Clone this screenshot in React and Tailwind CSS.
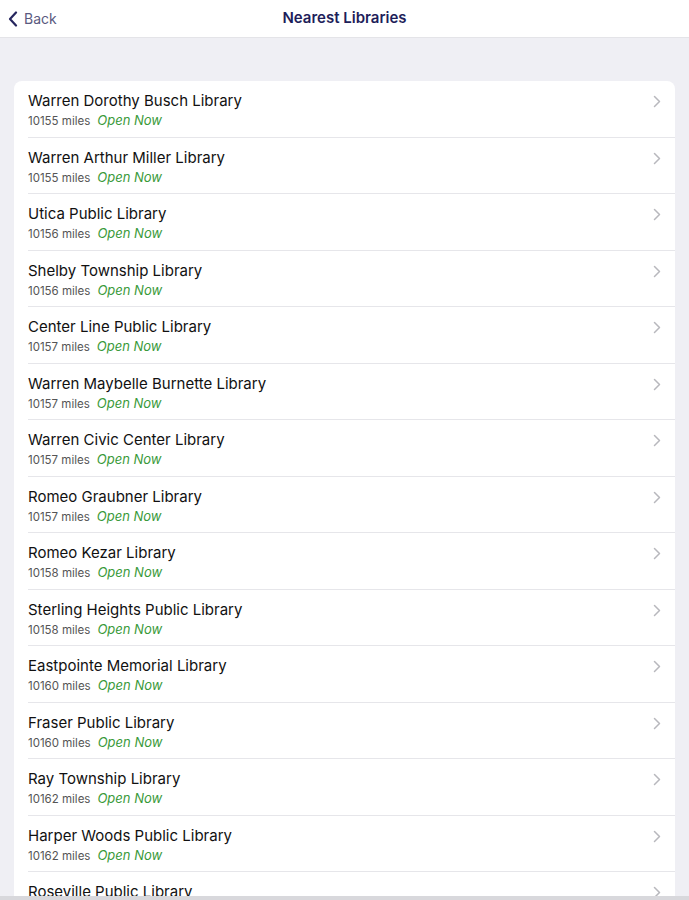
import React from 'react';

const libraries = [
  { name: 'Warren Dorothy Busch Library', miles: '10155' },
  { name: 'Warren Arthur Miller Library', miles: '10155' },
  { name: 'Utica Public Library', miles: '10156' },
  { name: 'Shelby Township Library', miles: '10156' },
  { name: 'Center Line Public Library', miles: '10157' },
  { name: 'Warren Maybelle Burnette Library', miles: '10157' },
  { name: 'Warren Civic Center Library', miles: '10157' },
  { name: 'Romeo Graubner Library', miles: '10157' },
  { name: 'Romeo Kezar Library', miles: '10158' },
  { name: 'Sterling Heights Public Library', miles: '10158' },
  { name: 'Eastpointe Memorial Library', miles: '10160' },
  { name: 'Fraser Public Library', miles: '10160' },
  { name: 'Ray Township Library', miles: '10162' },
  { name: 'Harper Woods Public Library', miles: '10162' },
  { name: 'Roseville Public Library', miles: '10163' },
];

function Chevron({ className }) {
  return (
    <svg viewBox="0 0 8 13" className={className} fill="none" stroke="currentColor" strokeWidth="1.5" strokeLinecap="round" strokeLinejoin="round">
      <path d="M1.5 1.5 L6.5 6.5 L1.5 11.5" />
    </svg>
  );
}

export default function App() {
  return (
    <div className="h-[900px] overflow-hidden bg-[#efeff4] flex flex-col" style={{ fontFamily: 'Inter, "Liberation Sans", sans-serif' }}>
      {/* Nav bar */}
      <div className="h-[38px] shrink-0 bg-white border-b border-[#e4e4e8] relative flex items-center justify-center">
        <div className="absolute left-[8px] top-0 h-full flex items-center gap-[6px]">
          <svg viewBox="0 0 10 16" className="w-[10px] h-[16px] text-[#26265e]" fill="none" stroke="currentColor" strokeWidth="2.2" strokeLinecap="round" strokeLinejoin="round">
            <path d="M8 1.5 L2 8 L8 14.5" />
          </svg>
          <span className="text-[14px] text-[#5a5a80]">Back</span>
        </div>
        <span className="text-[15px] font-semibold text-[#1e1e5a]">Nearest Libraries</span>
      </div>

      {/* List */}
      <div className="flex-1 px-[14px] pt-[43px] overflow-hidden">
        <div className="bg-white rounded-[8px] overflow-hidden">
          {libraries.map((lib) => (
            <div key={lib.name} className="h-[56.5px] pl-[14px] flex">
              <div className="flex-1 flex items-start border-b border-[#e6e6ea] pr-[14px] pt-[10px]">
                <div className="flex-1 flex flex-col">
                  <span className="text-[15px] leading-[19px] text-[#111]">{lib.name}</span>
                  <div className="flex items-baseline gap-[7px] mt-[1px]">
                    <span className="text-[11.5px] text-[#555]">{lib.miles} miles</span>
                    <span className="text-[13px] italic text-[#3a9a3a]">Open Now</span>
                  </div>
                </div>
                <Chevron className="w-[8px] h-[13px] mt-[4px] text-[#b8b8bd]" />
              </div>
            </div>
          ))}
        </div>
      </div>
      <div className="h-[4px] shrink-0 bg-[#d8d8dc]" />
    </div>
  );
}
